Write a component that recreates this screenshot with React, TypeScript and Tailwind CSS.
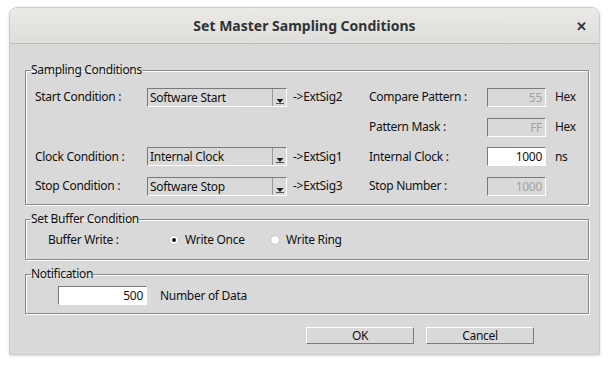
import React from 'react';

const FONT = { fontFamily: '"Noto Sans", "Open Sans", sans-serif' };

function Combo({ value }: { value: string }) {
  return (
    <div className="flex h-[19px] w-[140px] border-t border-l border-[#7a7a7a] border-b border-r border-b-white border-r-white bg-[#d9d9d9]">
      <div className="flex-1 pl-[2px] leading-[17px] text-[#111]">{value}</div>
      <div className="flex w-[14px] items-end justify-center border-l border-[#9a9a9a] pb-[2px]">
        <svg width="8" height="6" viewBox="0 0 8 6">
          <path d="M0.5 1 L7.5 1 L4 5 Z" fill="#1a1a1a" />
          <rect x="0" y="5" width="8" height="1" fill="#555" />
        </svg>
      </div>
    </div>
  );
}

function NumField({ value, active = false, w = 'w-[59px]' }: { value: string; active?: boolean; w?: string }) {
  return (
    <div
      className={`${w} h-[19px] border-t border-l border-[#7a7a7a] border-b border-r border-b-white border-r-white pr-[3px] text-right leading-[17px] ${
        active ? 'bg-white text-[#111]' : 'bg-[#d9d9d9] text-[#a3a3a3]'
      }`}
    >
      {value}
    </div>
  );
}

function Radio({ checked }: { checked: boolean }) {
  return (
    <span className="flex h-[10px] w-[10px] items-center justify-center rounded-full border border-[#c4c4c4] bg-white">
      {checked && <span className="h-[4px] w-[4px] rounded-full bg-[#111]" />}
    </span>
  );
}

function Group({ title, className, children }: { title: string; className?: string; children: React.ReactNode }) {
  return (
    <fieldset className={`border border-[#8a8a8a] shadow-[inset_1px_1px_0_#fff,1px_1px_0_#fff] ${className ?? ''}`}>
      <legend className="ml-[5px] px-0 leading-[16px] text-[#111]">{title}</legend>
      {children}
    </fieldset>
  );
}

export default function App() {
  return (
    <div className="h-[365px] w-[610px] bg-white pl-[9px] pt-[7px]" style={FONT}>
      <div className="w-[591px] overflow-hidden rounded-t-[8px] border border-[#cfccc8] shadow-[0_1px_3px_rgba(0,0,0,0.15)]">
        {/* Title bar */}
        <div className="relative flex h-[36px] items-center justify-center border-b border-[#bdbab5] bg-gradient-to-b from-[#ebe9e6] to-[#e0deda]">
          <span className="text-[14px] font-bold text-[#2e3436]">Set Master Sampling Conditions</span>
          <span className="absolute right-[12px] top-[9px] text-[13px] font-bold leading-[18px] text-[#2e3436]">✕</span>
        </div>

        {/* Body */}
        <div className="h-[310px] bg-[#d9d9d9] pl-[15px] pt-[18px] text-[12px] tracking-[-0.3px] text-[#111]">
          <Group title="Sampling Conditions" className="w-[564px] pb-[3px] pt-[4px]">
            <div className="flex h-[30px] items-center pl-[9px]">
              <span className="w-[112px]">Start Condition :</span>
              <Combo value="Software Start" />
              <span className="w-[82px] pl-[6px]">-&gt;ExtSig2</span>
              <span className="w-[118px]">Compare Pattern :</span>
              <NumField value="55" />
              <span className="pl-[9px]">Hex</span>
            </div>
            <div className="flex h-[30px] items-center pl-[9px]">
              <span className="w-[112px]" />
              <span className="w-[140px]" />
              <span className="w-[82px]" />
              <span className="w-[118px]">Pattern Mask :</span>
              <NumField value="FF" />
              <span className="pl-[9px]">Hex</span>
            </div>
            <div className="flex h-[29px] items-center pl-[9px]">
              <span className="w-[112px]">Clock Condition :</span>
              <Combo value="Internal Clock" />
              <span className="w-[82px] pl-[6px]">-&gt;ExtSig1</span>
              <span className="w-[118px]">Internal Clock :</span>
              <NumField value="1000" active />
              <span className="pl-[9px]">ns</span>
            </div>
            <div className="flex h-[30px] items-center pl-[9px]">
              <span className="w-[112px]">Stop Condition :</span>
              <Combo value="Software Stop" />
              <span className="w-[82px] pl-[6px]">-&gt;ExtSig3</span>
              <span className="w-[118px]">Stop Number :</span>
              <NumField value="1000" />
            </div>
          </Group>

          <Group title="Set Buffer Condition" className="mt-[6px] w-[564px] pb-[6px]">
            <div className="flex h-[26px] items-center pl-[22px]">
              <span className="w-[121px]">Buffer Write :</span>
              <Radio checked />
              <span className="w-[91px] pl-[6px]">Write Once</span>
              <Radio checked={false} />
              <span className="pl-[6px]">Write Ring</span>
            </div>
          </Group>

          <Group title="Notification" className="mt-[6px] w-[564px] pb-[4px]">
            <div className="flex h-[27px] items-center pl-[32px]">
              <NumField value="500" active w="w-[89px]" />
              <span className="pl-[13px]">Number of Data</span>
            </div>
          </Group>

          <div className="mt-[13px] flex gap-[12px] pl-[281px]">
            <button className="h-[17px] w-[108px] border-t border-l border-white border-b border-r border-b-[#7a7a7a] border-r-[#7a7a7a] bg-[#d9d9d9] leading-[15px] text-[#111]">
              OK
            </button>
            <button className="h-[17px] w-[108px] border-t border-l border-white border-b border-r border-b-[#7a7a7a] border-r-[#7a7a7a] bg-[#d9d9d9] leading-[15px] text-[#111]">
              Cancel
            </button>
          </div>
        </div>
      </div>
    </div>
  );
}
